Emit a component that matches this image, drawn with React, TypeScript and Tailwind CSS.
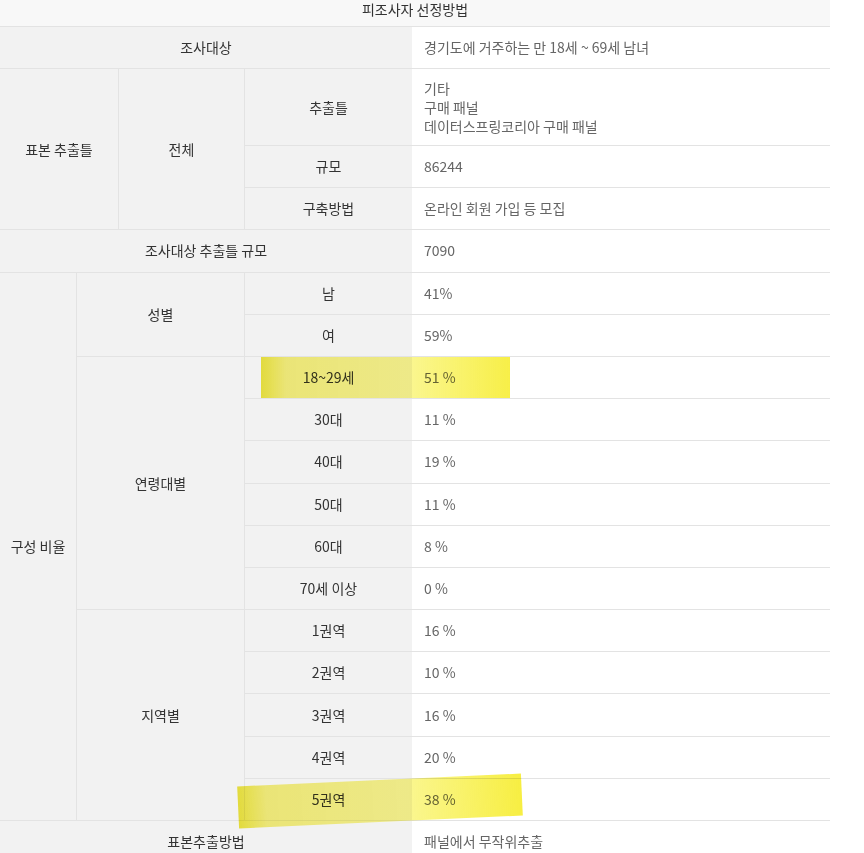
import * as React from "react";

const label =
  "flex items-center justify-center bg-[#f2f2f2] border-b border-[#e3e3e3] text-[#333]";
const value =
  "flex items-center bg-white border-b border-[#e3e3e3] pl-3 text-[#666]";

const ages = [
  ["18~29세", "51 %"],
  ["30대", "11 %"],
  ["40대", "19 %"],
  ["50대", "11 %"],
  ["60대", "8 %"],
  ["70세 이상", "0 %"],
];

const regions = [
  ["1권역", "16 %"],
  ["2권역", "10 %"],
  ["3권역", "16 %"],
  ["4권역", "20 %"],
  ["5권역", "38 %"],
];

function Pair({ row, name, val }: { row: number; name: string; val: string }) {
  return (
    <>
      <div className={label + " col-start-4"} style={{ gridRowStart: row }}>
        {name}
      </div>
      <div className={value + " col-start-5"} style={{ gridRowStart: row }}>
        {val}
      </div>
    </>
  );
}

export default function App() {
  return (
    <div
      className="relative h-[853px] w-[864px] overflow-hidden bg-white text-[14px] leading-[19px]"
      style={{ fontFamily: '"Noto Sans CJK KR", "Noto Sans", sans-serif' }}
    >
      <div className="grid w-[830px] grid-cols-[77px_42px_126px_167px_418px] grid-rows-[27px_42px_77px_repeat(16,42.19px)_42px]">
        {/* 헤더 */}
        <div className="col-span-5 col-start-1 row-start-1 flex items-end justify-center border-b border-[#e3e3e3] bg-[#f8f8f8] pb-[10px] leading-[14px] text-[#333]">
          피조사자 선정방법
        </div>

        <div className={label + " col-span-4 col-start-1 row-start-2"}>조사대상</div>
        <div className={value + " col-start-5 row-start-2"}>
          경기도에 거주하는 만 18세 ~ 69세 남녀
        </div>

        {/* 표본 추출틀 */}
        <div className={label + " col-span-2 col-start-1 row-span-3 row-start-3 border-r"}>
          표본 추출틀
        </div>
        <div className={label + " col-start-3 row-span-3 row-start-3 border-r"}>전체</div>
        <div className={label + " col-start-4 row-start-3"}>추출틀</div>
        <div className={value + " col-start-5 row-start-3"}>
          <div>
            기타
            <br />
            구매 패널
            <br />
            데이터스프링코리아 구매 패널
          </div>
        </div>
        <Pair row={4} name="규모" val="86244" />
        <Pair row={5} name="구축방법" val="온라인 회원 가입 등 모집" />

        <div className={label + " col-span-4 col-start-1 row-start-6"}>조사대상 추출틀 규모</div>
        <div className={value + " col-start-5 row-start-6"}>7090</div>

        {/* 구성 비율 */}
        <div className={label + " col-start-1 row-span-13 row-start-7 border-r"}>구성 비율</div>
        <div className={label + " col-span-2 col-start-2 row-span-2 row-start-7 border-r"}>성별</div>
        <Pair row={7} name="남" val="41%" />
        <Pair row={8} name="여" val="59%" />

        <div className={label + " col-span-2 col-start-2 row-span-6 row-start-9 border-r"}>
          연령대별
        </div>
        {ages.map(([n, v], i) => (
          <Pair key={n} row={9 + i} name={n} val={v} />
        ))}

        <div className={label + " col-span-2 col-start-2 row-span-5 row-start-15 border-r"}>
          지역별
        </div>
        {regions.map(([n, v], i) => (
          <Pair key={n} row={15 + i} name={n} val={v} />
        ))}

        <div className={label + " col-span-4 col-start-1 row-start-20"}>표본추출방법</div>
        <div className={value + " col-start-5 row-start-20"}>패널에서 무작위추출</div>
      </div>

      {/* 형광펜 표시 */}
      <div className="pointer-events-none absolute left-[261px] top-[357px] h-[41px] w-[249px] bg-[linear-gradient(90deg,rgba(236,226,30,0.85),rgba(244,236,70,0.7)_10%,rgba(248,242,90,0.68)_60%,rgba(246,236,40,0.85))] mix-blend-multiply" />
      <div className="pointer-events-none absolute left-[238px] top-[780px] h-[42px] w-[284px] -rotate-[2.6deg] bg-[linear-gradient(90deg,rgba(236,226,30,0.85),rgba(244,236,70,0.7)_10%,rgba(248,242,90,0.68)_60%,rgba(246,236,40,0.88))] mix-blend-multiply" />
    </div>
  );
}
